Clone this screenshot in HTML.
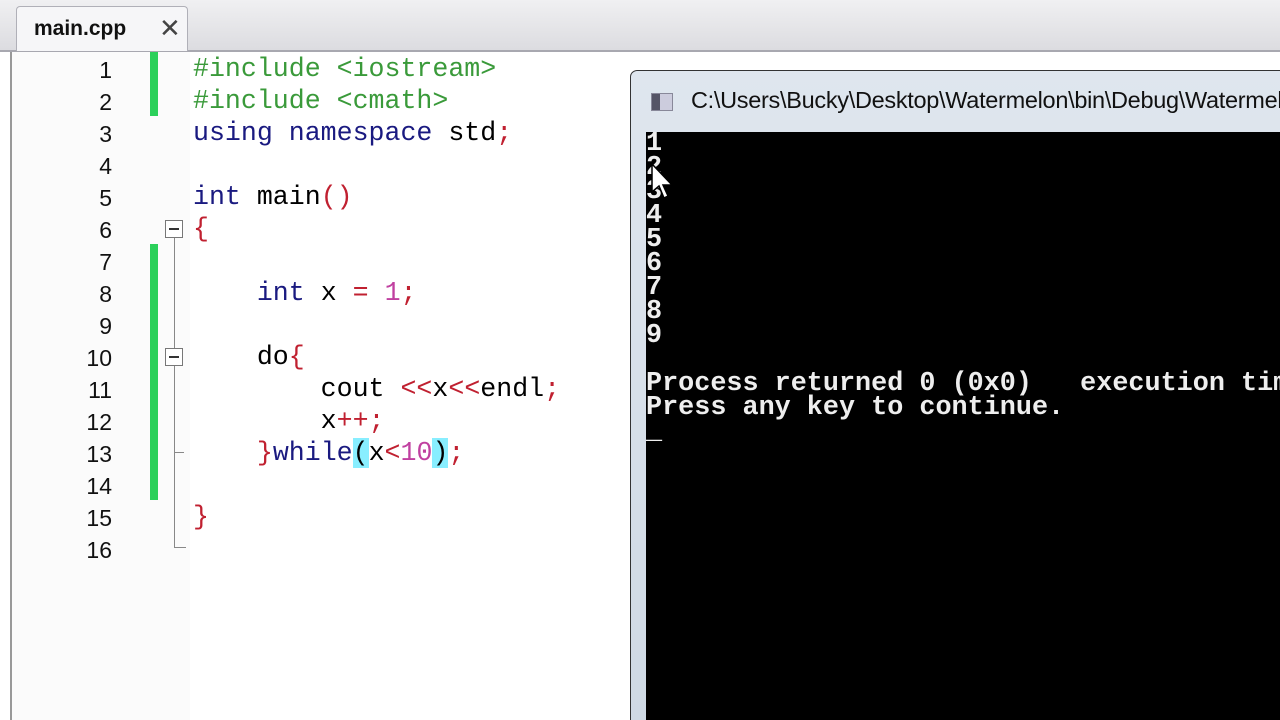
<!DOCTYPE html>
<html><head><style>
body{margin:0;width:1280px;height:720px;overflow:hidden;background:#fff;position:relative;font-family:"Liberation Mono",monospace}
.tabbar{position:absolute;left:0;top:0;width:1280px;height:50px;background:linear-gradient(#f0f0f2,#dcdce0);border-bottom:2px solid #a8a8b0}
.tab{position:absolute;left:16px;top:6px;width:170px;height:44px;background:#f6f6f8;border:1px solid #b0b0b8;border-bottom:none;border-radius:4px 4px 0 0;font:bold 21px "Liberation Sans",sans-serif;color:#111}
.ed{position:absolute;left:10px;top:52px;width:1268px;height:668px;background:#fff;border-left:2px solid #999}
.gut{position:absolute;left:12px;top:52px;width:178px;height:668px;background:#fbfbfb}
.ln{position:absolute;left:60px;width:52px;text-align:right;font:23px "Liberation Sans",sans-serif;color:#111}
.code{position:absolute;left:193px;font-size:26.6px;white-space:pre;color:#000;line-height:32px}
.g{color:#3a9a3a}.n{color:#1a1a80}.r{color:#c02030}.m{color:#c040a0}
.bar{position:absolute;left:150px;width:8px;background:#2bd05a}
.fold{position:absolute;left:165px;width:18px;height:18px;border:1px solid #777;background:#fff;box-sizing:border-box}
.fold:after{content:"";position:absolute;left:3px;top:7px;width:10px;height:2px;background:#333}
.vl{position:absolute;left:174px;width:1px;background:#888}
.win{position:absolute;left:630px;top:70px;width:650px;height:650px;box-sizing:border-box;overflow:hidden;background:linear-gradient(#dfe6ee,#cfd9e4);border:1px solid #333;border-right:none;border-bottom:none;border-radius:7px 0 0 0}
.con{position:absolute;left:15px;top:61px;width:635px;height:589px;overflow:hidden;background:#000;color:#eee;font-weight:bold;font-size:26.8px;line-height:24px;white-space:pre}
</style></head><body>
<div class="tabbar"><div class="tab"><span style="position:absolute;left:17px;top:10px">main.cpp</span><span style="position:absolute;left:142px;top:6px;font-weight:normal;font-size:26px;color:#444">✕</span></div></div>
<div class="ed"></div><div class="gut"></div>
<div class="bar" style="top:52px;height:64px"></div>
<div class="bar" style="top:244px;height:256px"></div>
<div class="ln" style="top:57px">1</div><div class="ln" style="top:89px">2</div><div class="ln" style="top:121px">3</div><div class="ln" style="top:153px">4</div><div class="ln" style="top:185px">5</div><div class="ln" style="top:217px">6</div><div class="ln" style="top:249px">7</div><div class="ln" style="top:281px">8</div><div class="ln" style="top:313px">9</div><div class="ln" style="top:345px">10</div><div class="ln" style="top:377px">11</div><div class="ln" style="top:409px">12</div><div class="ln" style="top:441px">13</div><div class="ln" style="top:473px">14</div><div class="ln" style="top:505px">15</div><div class="ln" style="top:537px">16</div>
<div class="vl" style="top:238px;height:310px"></div>
<div style="position:absolute;left:174px;top:452px;width:10px;height:1px;background:#888"></div>
<div style="position:absolute;left:174px;top:547px;width:12px;height:1px;background:#888"></div>
<div class="fold" style="top:220px"></div><div class="fold" style="top:348px"></div>
<div class="code" style="top:53px"><span class="g">#include &lt;iostream&gt;</span>
<span class="g">#include &lt;cmath&gt;</span>
<span class="n">using namespace</span> std<span class="r">;</span>

<span class="n">int</span> main<span class="r">()</span>
<span class="r">{</span>

    <span class="n">int</span> x <span class="r">=</span> <span class="m">1</span><span class="r">;</span>

    do<span class="r">{</span>
        cout <span class="r">&lt;&lt;</span>x<span class="r">&lt;&lt;</span>endl<span class="r">;</span>
        x<span class="r">++;</span>
    <span class="r">}</span><span class="n">while</span><span style="background:#8ef">(</span>x<span class="r">&lt;</span><span class="m">10</span><span style="background:#8ef">)</span><span class="r">;</span>

<span class="r">}</span></div>
<div class="win"><div style="position:absolute;left:20px;top:22px;width:20px;height:16px;background:linear-gradient(90deg,#556 40%,#ccd 40%);border:1px solid #889"></div><div style="position:absolute;left:60px;top:16px;font:23.5px 'Liberation Sans',sans-serif;letter-spacing:-0.3px;color:#111;white-space:nowrap">C:\Users\Bucky\Desktop\Watermelon\bin\Debug\Watermelon.exe</div>
<div class="con">1
2
3
4
5
6
7
8
9

Process returned 0 (0x0)   execution time
Press any key to continue.
_</div></div>
<svg style="position:absolute;left:650px;top:162px" width="28" height="40"><path d="M2 2 L2 30 L9 24 L14 36 L18 34 L13 23 L22 23 Z" fill="#fff" stroke="#000" stroke-width="1.5"/></svg>
</body></html>
